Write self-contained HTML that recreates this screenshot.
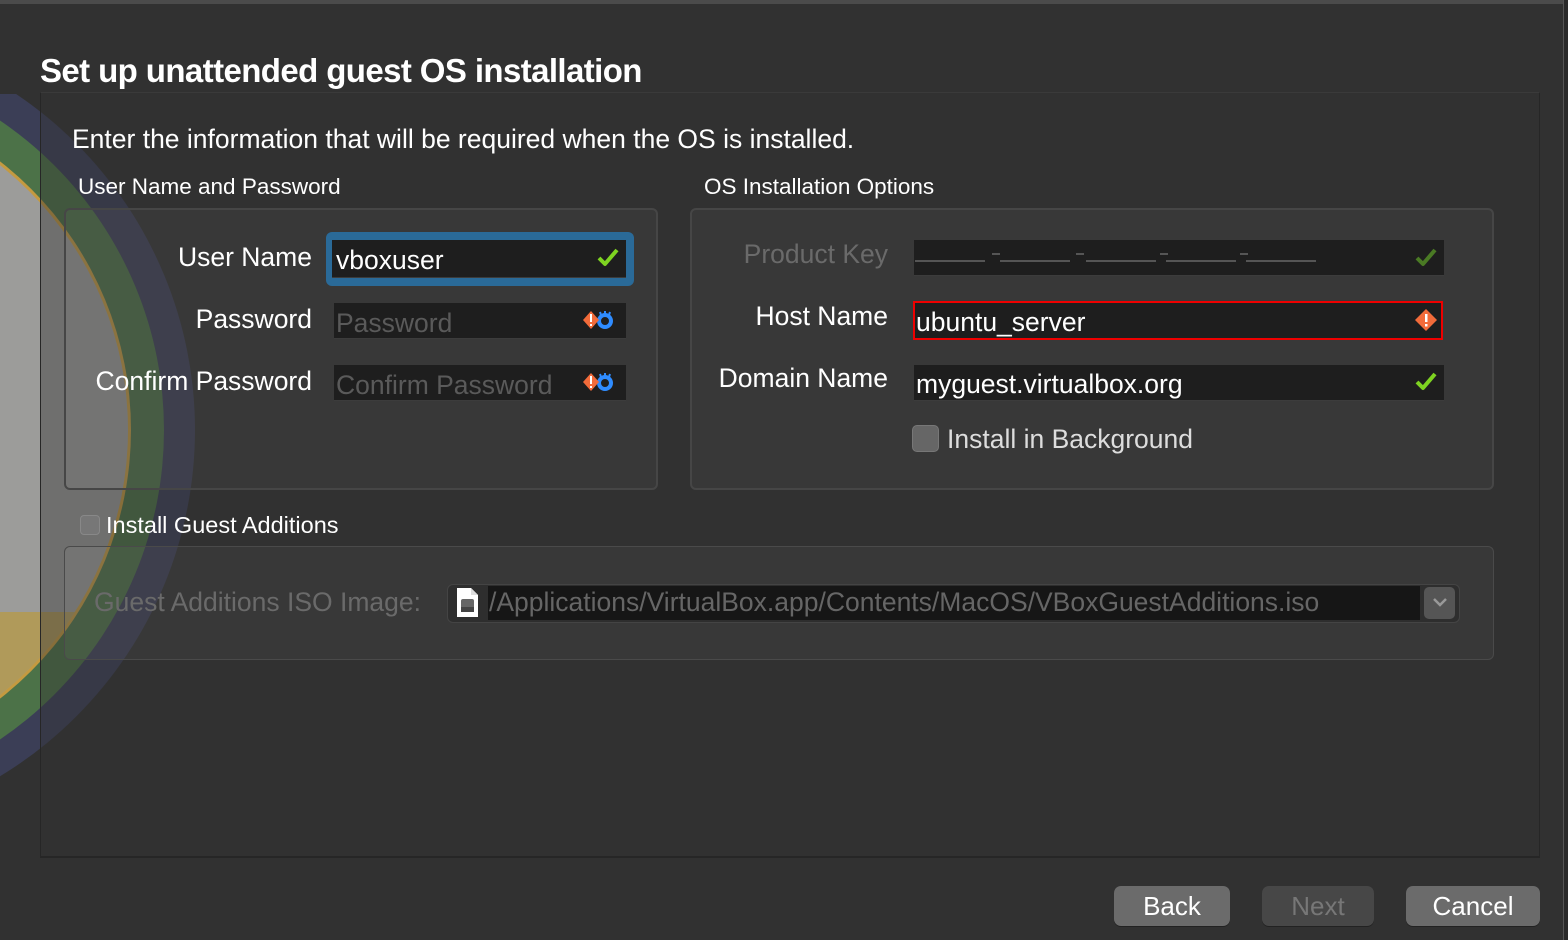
<!DOCTYPE html>
<html><head><meta charset="utf-8">
<style>
*{margin:0;padding:0;box-sizing:border-box}
html,body{width:1568px;height:940px;overflow:hidden;background:#313131;font-family:"Liberation Sans",sans-serif;color:#fff;position:relative}
.abs{position:absolute}
.topline{left:0;top:0;width:1568px;height:4px;background:#4b4b4b}
.rightline{left:1563px;top:0;width:5px;height:940px;background:#2a2a2a;border-left:1px solid #555}
.title{left:40px;top:52px;font-size:33px;font-weight:bold;letter-spacing:-0.6px;white-space:nowrap}
.panel{left:40px;top:92px;width:1500px;height:766px;border-left:1px solid #262626;border-bottom:2px solid #262626;border-top:1px solid #3a3a3a;border-right:1px solid #262626;overflow:hidden}
.t{white-space:nowrap}
.group{border:2px solid #464646;border-radius:6px;background:rgba(255,255,255,0.035)}
.field{background:#1e1e1e;border-bottom:1px solid #3c3c3c;height:36px}
.lbl{font-size:26.5px;text-align:right;white-space:nowrap}
.ph{color:#5a5a5a}
.cb{width:24px;height:24px;border-radius:5px;background:#6a6a6a;border:1px solid #777}
.btn{height:40px;border-radius:7px;background:#6b6b6b;font-size:26px;text-align:center;line-height:40px;box-shadow:0 1px 0 #222}
</style></head><body>
<div class="abs topline"></div>
<svg class="abs" style="left:0;top:0" width="260" height="940">
 <defs>
  <clipPath id="c"><rect x="0" y="94" width="260" height="846"/></clipPath>
  <clipPath id="inn"><circle cx="-210" cy="430" r="338"/></clipPath>
 </defs>
 <g clip-path="url(#c)">
  <circle cx="-210" cy="430" r="405" fill="#3b3e56"/>
  <circle cx="-210" cy="430" r="374" fill="#4c7248"/>
  <circle cx="-210" cy="430" r="341" fill="#c49a40"/>
  <circle cx="-210" cy="430" r="338" fill="#9c9c9a"/>
  <rect x="-600" y="612" width="900" height="400" fill="#b09a5a" clip-path="url(#inn)"/>
 </g>
</svg>
<div class="abs" style="left:40px;top:92px;width:240px;height:766px;background:rgba(50,50,50,0.42)"></div>
<div class="abs panel"></div>
<div class="abs rightline"></div>
<div class="abs title">Set up unattended guest OS installation</div>

<div class="abs t" style="left:72px;top:124px;font-size:26.5px">Enter the information that will be required when the OS is installed.</div>
<div class="abs t" style="left:78px;top:174px;font-size:22.5px">User Name and Password</div>
<div class="abs t" style="left:704px;top:174px;font-size:22.5px">OS Installation Options</div>

<div class="abs group" style="left:64px;top:208px;width:594px;height:282px"></div>
<div class="abs group" style="left:690px;top:208px;width:804px;height:282px"></div>

<div class="abs lbl" style="left:40px;width:272px;top:242px">User Name</div>
<div class="abs" style="left:326px;top:232px;width:308px;height:54px;border-radius:6px;background:#2a6a98"></div>
<div class="abs field" style="left:332px;top:240px;width:294px;height:38px"></div>
<div class="abs t" style="left:336px;top:245px;font-size:26.5px">vboxuser</div>
<svg class="abs" style="left:597px;top:247px" width="22" height="20"><path d="M2 11 L8 17 L20 3" stroke="#7ed321" stroke-width="4" fill="none" stroke-linejoin="round"/></svg>

<div class="abs lbl" style="left:40px;width:272px;top:304px">Password</div>
<div class="abs field" style="left:334px;top:303px;width:292px"></div>
<div class="abs t ph" style="left:336px;top:308px;font-size:26.5px">Password</div>
<div class="abs lbl" style="left:40px;width:272px;top:366px">Confirm Password</div>
<div class="abs field" style="left:334px;top:365px;width:292px"></div>
<div class="abs t ph" style="left:336px;top:370px;font-size:26.5px">Confirm Password</div>

<svg class="abs" style="left:580px;top:306px" width="40" height="30"><circle cx="25" cy="15" r="6" fill="none" stroke="#2f8cff" stroke-width="4"/><path d="M20 6 l1 3 M25 5 v3 M30 6 l-1 3" stroke="#2f8cff" stroke-width="2"/><path d="M11 5 L19 14 L11 23 L3 14 Z" fill="#f26b3a"/><rect x="10" y="8" width="2" height="8" fill="#fff"/><rect x="10" y="18" width="2" height="2" fill="#fff"/></svg>
<svg class="abs" style="left:580px;top:368px" width="40" height="30"><circle cx="25" cy="15" r="6" fill="none" stroke="#2f8cff" stroke-width="4"/><path d="M20 6 l1 3 M25 5 v3 M30 6 l-1 3" stroke="#2f8cff" stroke-width="2"/><path d="M11 5 L19 14 L11 23 L3 14 Z" fill="#f26b3a"/><rect x="10" y="8" width="2" height="8" fill="#fff"/><rect x="10" y="18" width="2" height="2" fill="#fff"/></svg>

<div class="abs lbl" style="left:680px;width:208px;top:239px;color:#6a6a6a">Product Key</div>
<div class="abs field" style="left:914px;top:240px;width:530px"></div>
<svg class="abs" style="left:914px;top:250px" width="420" height="20"><g fill="#555"><rect x="1" y="10" width="70" height="2"/><rect x="78" y="3" width="8" height="2"/><rect x="86" y="10" width="70" height="2"/><rect x="162" y="3" width="8" height="2"/><rect x="172" y="10" width="70" height="2"/><rect x="246" y="3" width="8" height="2"/><rect x="252" y="10" width="70" height="2"/><rect x="326" y="3" width="8" height="2"/><rect x="332" y="10" width="70" height="2"/></g></svg>
<svg class="abs" style="left:1415px;top:247px" width="22" height="20"><path d="M2 11 L8 17 L20 3" stroke="#4a7a24" stroke-width="4" fill="none" stroke-linejoin="round"/></svg>

<div class="abs lbl" style="left:680px;width:208px;top:301px">Host Name</div>
<div class="abs field" style="left:913px;top:301px;width:530px;height:39px;border:2px solid #e00"></div>
<div class="abs t" style="left:916px;top:307px;font-size:26.5px">ubuntu_server</div>
<svg class="abs" style="left:1414px;top:308px" width="24" height="24"><path d="M12 1 L23 12 L12 23 L1 12 Z" fill="#f26b3a"/><rect x="11" y="6" width="2.5" height="8" fill="#fff"/><rect x="11" y="16" width="2.5" height="2.5" fill="#fff"/></svg>

<div class="abs lbl" style="left:680px;width:208px;top:363px">Domain Name</div>
<div class="abs field" style="left:914px;top:365px;width:530px"></div>
<div class="abs t" style="left:916px;top:369px;font-size:26.5px">myguest.virtualbox.org</div>
<svg class="abs" style="left:1415px;top:371px" width="22" height="20"><path d="M2 11 L8 17 L20 3" stroke="#7ed321" stroke-width="4" fill="none" stroke-linejoin="round"/></svg>

<div class="abs cb" style="left:912px;top:425px;width:27px;height:27px;background:#666"></div>
<div class="abs t" style="left:947px;top:424px;font-size:26.5px;color:#ddd">Install in Background</div>

<div class="abs cb" style="left:80px;top:515px;width:20px;height:20px;border-radius:4px;background:#777;border-color:#888"></div>
<div class="abs t" style="left:106px;top:512px;font-size:23.5px">Install Guest Additions</div>
<div class="abs group" style="left:64px;top:546px;width:1430px;height:114px;border-width:1px;border-color:#4a4a4a"></div>
<div class="abs t" style="left:94px;top:587px;font-size:26.5px;color:#6a6a6a">Guest Additions ISO Image:</div>
<div class="abs" style="left:447px;top:584px;width:1013px;height:39px;border:1px solid #444;border-radius:6px;background:#2e2e2e"></div>
<div class="abs" style="left:488px;top:586px;width:932px;height:34px;background:#161616"></div>
<svg class="abs" style="left:456px;top:587px" width="24" height="32"><path d="M1 1 H15 L22 8 V30 H1 Z" fill="#fff"/><path d="M15 1 V8 H22" fill="#ddd"/><rect x="5" y="12" width="13" height="13" rx="2" fill="#666"/><rect x="5" y="20" width="13" height="5" fill="#444"/></svg>
<div class="abs t" style="left:489px;top:587px;font-size:26.5px;color:#666">/Applications/VirtualBox.app/Contents/MacOS/VBoxGuestAdditions.iso</div>
<div class="abs" style="left:1424px;top:587px;width:31px;height:32px;background:#555;border-radius:5px"></div>
<svg class="abs" style="left:1432px;top:596px" width="16" height="12"><path d="M2 3 L8 9 L14 3" stroke="#999" stroke-width="2.5" fill="none"/></svg>

<div class="abs btn" style="left:1114px;top:886px;width:116px">Back</div>
<div class="abs btn" style="left:1262px;top:886px;width:112px;background:#474747;color:#777">Next</div>
<div class="abs btn" style="left:1406px;top:886px;width:134px">Cancel</div>
</body></html>
